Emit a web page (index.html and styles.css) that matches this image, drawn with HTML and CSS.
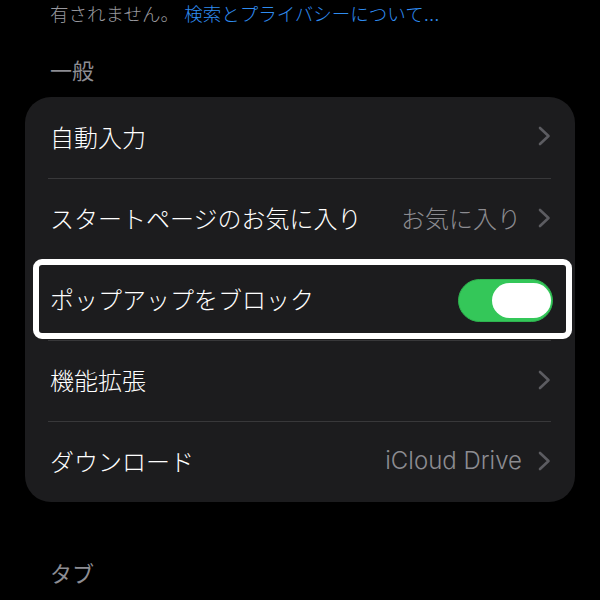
FILE: index.html
```html
<!DOCTYPE html>
<html lang="ja">
<head>
  <meta charset="UTF-8" />
  <meta name="viewport" content="width=device-width, initial-scale=1.0"/>
  <title>Safari</title>
  <link rel="stylesheet" href="styles.css">
</head>
<body>
  <div class="screen">
    <p class="note">有されません。 <a class="link">検索とプライバシーについて...</a></p>

    <h3 class="group-title">一般</h3>
    <div class="card">
      <div class="row">
        <span class="label">自動入力</span>
        <span class="chev"><svg viewBox="0 0 13 20" width="13" height="20"><path d="M2 2 L10.5 10 L2 18" /></svg></span>
      </div>
      <div class="row">
        <span class="label">スタートページのお気に入り</span>
        <span class="value">お気に入り</span>
        <span class="chev"><svg viewBox="0 0 13 20" width="13" height="20"><path d="M2 2 L10.5 10 L2 18" /></svg></span>
      </div>
      <div class="row focus">
        <span class="label">ポップアップをブロック</span>
        <span class="toggle on"><span class="knob"></span></span>
      </div>
      <div class="row">
        <span class="label">機能拡張</span>
        <span class="chev"><svg viewBox="0 0 13 20" width="13" height="20"><path d="M2 2 L10.5 10 L2 18" /></svg></span>
      </div>
      <div class="row">
        <span class="label">ダウンロード</span>
        <span class="value latin">iCloud Drive</span>
        <span class="chev"><svg viewBox="0 0 13 20" width="13" height="20"><path d="M2 2 L10.5 10 L2 18" /></svg></span>
      </div>
    </div>

    <h3 class="group-title tabs">タブ</h3>
  </div>
</body>
</html>
```

FILE: styles.css
```css
body {
  margin: 0;
  background-color: #000;
  color: #fff;
  font-family: "Inter", "Noto Sans CJK JP", sans-serif;
  font-weight: 300;
}

.screen {
  padding: 0 25px;
}

.note {
  margin: 2px 0 0 25px;
  font-size: 18.5px;
  line-height: 24px;
  color: #98989e;
}

.link {
  color: #2f8cf0;
  text-decoration: none;
}

.group-title {
  margin: 31px 0 12px 25px;
  font-size: 22px;
  font-weight: 400;
  line-height: 28px;
  color: #8d8d93;
}

.group-title.tabs {
  margin-top: 58px;
}

.card {
  background-color: #1c1c1e;
  border-radius: 26px;
}

.row {
  position: relative;
  box-sizing: border-box;
  height: 81px;
  margin: 0 24px 0 23px;
  padding: 0 0 3px 2px;
  display: flex;
  align-items: center;
  border-top: 1px solid #38383a;
}

.row:first-child {
  border-top: none;
}

.label {
  flex: 1;
  font-size: 24px;
  color: #fff;
}

.value {
  font-size: 24px;
  color: #8c8c91;
  margin-right: 17px;
}

.value.latin {
  font-size: 24px;
  margin-right: 16px;
}

.chev {
  display: flex;
}

.chev path {
  fill: none;
  stroke: #5c5c61;
  stroke-width: 2.6;
  stroke-linecap: round;
  stroke-linejoin: round;
}

.focus::before {
  content: "";
  position: absolute;
  top: -1px;
  bottom: 1px;
  left: -15px;
  right: -21px;
  border: 6px solid #fff;
  border-radius: 9px;
}

.toggle {
  position: relative;
  box-sizing: border-box;
  width: 95px;
  height: 43px;
  margin: 0 -2px -3px 0;
  padding: 3px 1px 3px 3px;
  border-radius: 22px;
  background-color: #34c759;
  border: 1px solid #2eb24f;
  display: flex;
  justify-content: flex-end;
}

.knob {
  width: 59px;
  height: 35px;
  border-radius: 18px;
  background-color: #fff;
}
```
